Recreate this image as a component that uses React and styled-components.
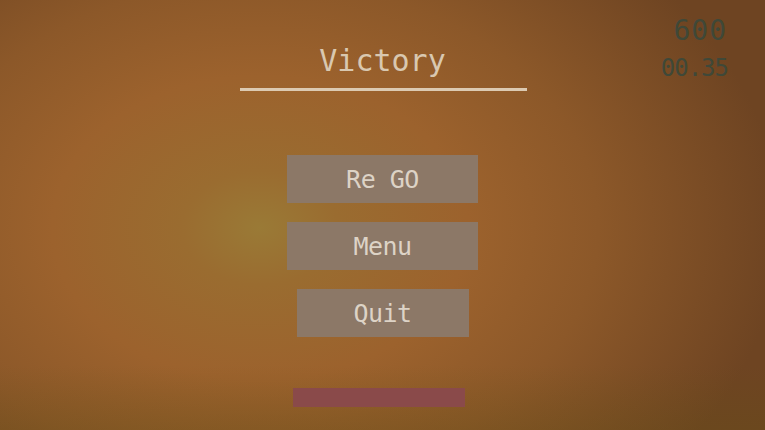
import styled, { createGlobalStyle } from 'styled-components';

const GlobalStyle = createGlobalStyle`
  html, body {
    margin: 0;
    padding: 0;
    overflow: hidden;
  }
  body {
    font-family: "DejaVu Sans Mono", "Liberation Mono", monospace;
  }
`;

const Screen = styled.div`
  position: relative;
  width: 765px;
  height: 430px;
  display: flex;
  flex-direction: column;
  align-items: center;
  background:
    linear-gradient(to bottom, rgba(0, 0, 0, 0) 85%, rgba(100, 80, 20, 0.3) 100%),
    radial-gradient(ellipse 520px 380px at 34% 53%, #9a7a36 0%, #9a6c30 15%, #9c622d 40%, #8c5829 65%, #6e4422 100%);
`;

const Hud = styled.div`
  position: absolute;
  top: 14px;
  right: 38px;
  display: flex;
  flex-direction: column;
  align-items: flex-end;
  color: #3f4838;
`;

const Score = styled.div`
  font-size: 28px;
  line-height: 34px;
  letter-spacing: 1px;
`;

const Timer = styled.div`
  margin-top: 6px;
  margin-right: -1px;
  font-size: 24px;
  line-height: 28px;
  letter-spacing: -1px;
`;

const Title = styled.h1`
  margin: 42px 0 0;
  font-size: 30px;
  line-height: 38px;
  font-weight: normal;
  color: #d9c8b0;
`;

const Underline = styled.div`
  width: 287px;
  height: 3px;
  margin-top: 8px;
  margin-left: 2px;
  background: #dccab2;
`;

const ButtonList = styled.div`
  display: flex;
  flex-direction: column;
  align-items: center;
  gap: 19px;
  margin-top: 64px;
`;

const MenuButton = styled.button`
  width: ${p => p.$w}px;
  height: 48px;
  border: none;
  padding: 0;
  background: #8c7867;
  color: #ddd3c6;
  font-family: "DejaVu Sans Mono", "Liberation Mono", monospace;
  font-size: 25px;
  letter-spacing: -0.5px;
  cursor: pointer;
`;

const HealthBar = styled.div`
  width: 172px;
  height: 19px;
  margin-top: 51px;
  margin-right: 8px;
  background: #8a4a4a;
`;

export default function App() {
  return (
    <>
      <GlobalStyle />
      <Screen>
        <Hud>
          <Score>600</Score>
          <Timer>00.35</Timer>
        </Hud>
        <Title>Victory</Title>
        <Underline />
        <ButtonList>
          <MenuButton $w={191}>Re GO</MenuButton>
          <MenuButton $w={191}>Menu</MenuButton>
          <MenuButton $w={172}>Quit</MenuButton>
        </ButtonList>
        <HealthBar />
      </Screen>
    </>
  );
}
